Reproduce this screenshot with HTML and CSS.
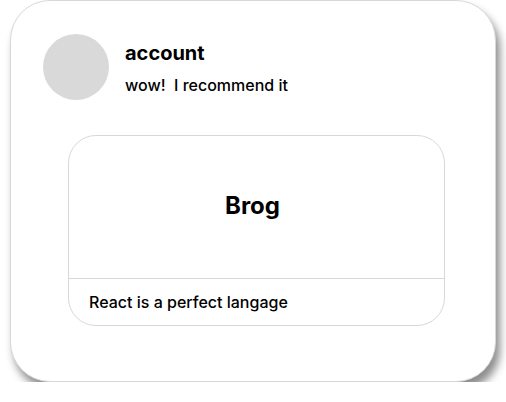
FILE: index.html
```html
<!DOCTYPE html>
<html>
<head>
<meta charset="utf-8">
<link rel="stylesheet" href="styles.css">
</head>
<body>
<div class="page">
  <div class="card">
    <div class="header">
      <div class="avatar"></div>
      <div class="meta">
        <div class="name">account</div>
        <div class="comment">wow!&nbsp; I recommend it</div>
      </div>
    </div>
    <div class="post">
      <div class="post-title">Brog</div>
      <div class="post-body">React is a perfect langage</div>
    </div>
  </div>
</div>
</body>
</html>
```

FILE: styles.css
```css
html, body {
  margin: 0;
  padding: 0;
  background: #fff;
}
body {
  font-family: Inter, "Noto Sans", sans-serif;
  color: #000;
}
.page {
  padding: 0 0 0 10px;
}
.card {
  box-sizing: border-box;
  width: 486px;
  height: 382px;
  border: 1px solid #d8d8d8;
  border-radius: 40px;
  background: #fff;
  box-shadow: 4px 8px 9px rgba(0, 0, 0, 0.45);
  padding: 33px 0 0 32px;
}
.header {
  display: flex;
  gap: 16px;
}
.avatar {
  width: 66px;
  height: 66px;
  border-radius: 50%;
  background: #d9d9d9;
  flex: none;
}
.meta {
  padding-top: 7px;
}
.name {
  font-size: 20px;
  font-weight: 700;
  line-height: 24px;
}
.comment {
  font-size: 16px;
  font-weight: 500;
  line-height: 20px;
  margin-top: 10px;
}
.post {
  box-sizing: border-box;
  width: 377px;
  height: 191px;
  margin: 35px 0 0 25px;
  border: 1px solid #d8d8d8;
  border-radius: 28px;
  display: flex;
  flex-direction: column;
}
.post-title {
  box-sizing: border-box;
  height: 143px;
  padding: 0 8px 4px 0;
  border-bottom: 1px solid #d8d8d8;
  display: flex;
  align-items: center;
  justify-content: center;
  font-size: 24px;
  font-weight: 700;
}
.post-body {
  flex: 1;
  display: flex;
  align-items: center;
  padding-left: 20px;
  font-size: 16px;
  font-weight: 500;
}
```
